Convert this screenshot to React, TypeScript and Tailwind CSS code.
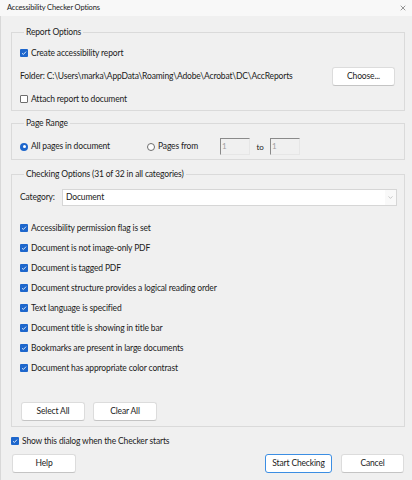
import { ChevronDown, X } from 'lucide-react';

const font = { fontFamily: 'Lato, "Noto Sans", sans-serif' };

function Check({ checked = true }: { checked?: boolean }) {
  if (!checked) {
    return <span className="inline-block w-[8px] h-[8px] rounded-[1px] border border-[#6d6d6d] bg-white shrink-0" />;
  }
  return (
    <span className="inline-flex items-center justify-center w-[8px] h-[8px] rounded-[1px] bg-[#1d66cc] shrink-0">
      <svg viewBox="0 0 8 8" className="w-[6px] h-[6px]">
        <path d="M1.3 4.2 L3.2 6 L6.7 2.2" fill="none" stroke="#fff" strokeWidth="1.1" />
      </svg>
    </span>
  );
}

function Radio({ checked }: { checked?: boolean }) {
  return checked ? (
    <span className="inline-flex items-center justify-center w-[8px] h-[8px] rounded-full bg-[#1d66cc] shrink-0">
      <span className="w-[3px] h-[3px] rounded-full bg-white" />
    </span>
  ) : (
    <span className="inline-block w-[8px] h-[8px] rounded-full border border-[#6d6d6d] bg-white shrink-0" />
  );
}

function Btn({ label, w, primary }: { label: string; w: string; primary?: boolean }) {
  return (
    <button
      className={`${w} h-[19px] bg-white rounded-[3px] text-[8.5px] tracking-[-0.15px] text-[#1b1b1b] ${
        primary ? 'border border-[#3c8ee3]' : 'border border-[#dcdcdc] border-b-[#c4c4c4]'
      }`}
    >
      {label}
    </button>
  );
}

function Group({ title, children, className }: { title: string; children: React.ReactNode; className?: string }) {
  return (
    <fieldset className={`border border-[#dadada] ${className ?? ''}`}>
      <legend className="ml-[4px] px-[2px] text-[8.5px] leading-[11px]">{title}</legend>
      {children}
    </fieldset>
  );
}

const checks = [
  'Accessibility permission flag is set',
  'Document is not image-only PDF',
  'Document is tagged PDF',
  'Document structure provides a logical reading order',
  'Text language is specified',
  'Document title is showing in title bar',
  'Bookmarks are present in large documents',
  'Document has appropriate color contrast',
];

export default function App() {
  return (
    <div className="w-[412px] h-[480px] bg-[#f0f0f0] text-[#1b1b1b] tracking-[-0.15px] overflow-hidden" style={font}>
      <div className="h-[16px] bg-[#f8f8f8] flex items-center justify-between pl-[7px] pr-[5px]">
        <span className="text-[7.5px]">Accessibility Checker Options</span>
        <X className="w-[8px] h-[8px] text-[#333]" strokeWidth={1.5} />
      </div>

      <div className="border-l border-[#d8d8d8] h-[464px] pl-[10px] pr-[7px] pt-[11px]">
        <Group title="Report Options" className="pl-[8px] pr-[9px] pt-[9px] pb-[5px]">
          <label className="flex items-center gap-[3px] h-[12px] text-[8.5px]">
            <Check /> Create accessibility report
          </label>
          <div className="flex items-center justify-between mt-[8px] h-[18px] text-[8.5px]">
            <span>Folder: C:\Users\marka\AppData\Roaming\Adobe\Acrobat\DC\AccReports</span>
            <Btn label="Choose..." w="w-[63px]" />
          </div>
          <label className="flex items-center gap-[3px] h-[12px] mt-[8px] text-[8.5px]">
            <Check checked={false} /> Attach report to document
          </label>
        </Group>

        <Group title="Page Range" className="mt-[7px] pl-[8px] pr-[9px] pt-[9px] pb-[4px]">
          <div className="flex items-center h-[17px] text-[8.5px]">
            <label className="flex items-center gap-[3px] w-[127px]">
              <Radio checked /> All pages in document
            </label>
            <label className="flex items-center gap-[3px] w-[73px]">
              <Radio /> Pages from
            </label>
            <span className="w-[30px] h-[17px] border border-[#e6e6e6] border-t-[#8a8a8a] border-l-[#8a8a8a] text-[#a0a0a0] pl-[1px] leading-[14px] text-[8px]">1</span>
            <span className="w-[20px] text-center text-[8px]">to</span>
            <span className="w-[30px] h-[17px] border border-[#e6e6e6] border-t-[#8a8a8a] border-l-[#8a8a8a] text-[#a0a0a0] pl-[1px] leading-[14px] text-[8px]">1</span>
          </div>
        </Group>

        <Group title="Checking Options (31 of 32 in all categories)" className="mt-[9px] pl-[8px] pr-[7px] pt-[9px] pb-[5px]">
          <div className="flex items-center h-[17px] text-[8.5px]">
            <span className="w-[42px]">Category:</span>
            <div className="flex-1 h-[17px] bg-white border border-[#d6d6d6] flex items-center justify-between pl-[3px]">
              <span>Document</span>
              <span className="h-full w-[11px] flex items-center justify-center bg-[#f9f9f9]">
                <ChevronDown className="w-[7px] h-[7px] text-[#8a8a8a]" strokeWidth={1.5} />
              </span>
            </div>
          </div>
          <div className="mt-[16px] flex flex-col gap-[8px]">
            {checks.map((c) => (
              <label key={c} className="flex items-center gap-[3px] h-[12px] text-[8.5px]">
                <Check /> {c}
              </label>
            ))}
          </div>
          <div className="flex gap-[8px] mt-[28px] pl-[1px]">
            <Btn label="Select All" w="w-[64px]" />
            <Btn label="Clear All" w="w-[64px]" />
          </div>
        </Group>

        <label className="flex items-center gap-[3px] h-[12px] mt-[8px] text-[8.5px]">
          <Check /> Show this dialog when the Checker starts
        </label>
        <div className="flex items-center mt-[7px] pl-[1px] pr-[1px]">
          <Btn label="Help" w="w-[64px]" />
          <div className="ml-auto flex gap-[9px]">
            <Btn label="Start Checking" w="w-[67px]" primary />
            <Btn label="Cancel" w="w-[63px]" />
          </div>
        </div>
      </div>
    </div>
  );
}
